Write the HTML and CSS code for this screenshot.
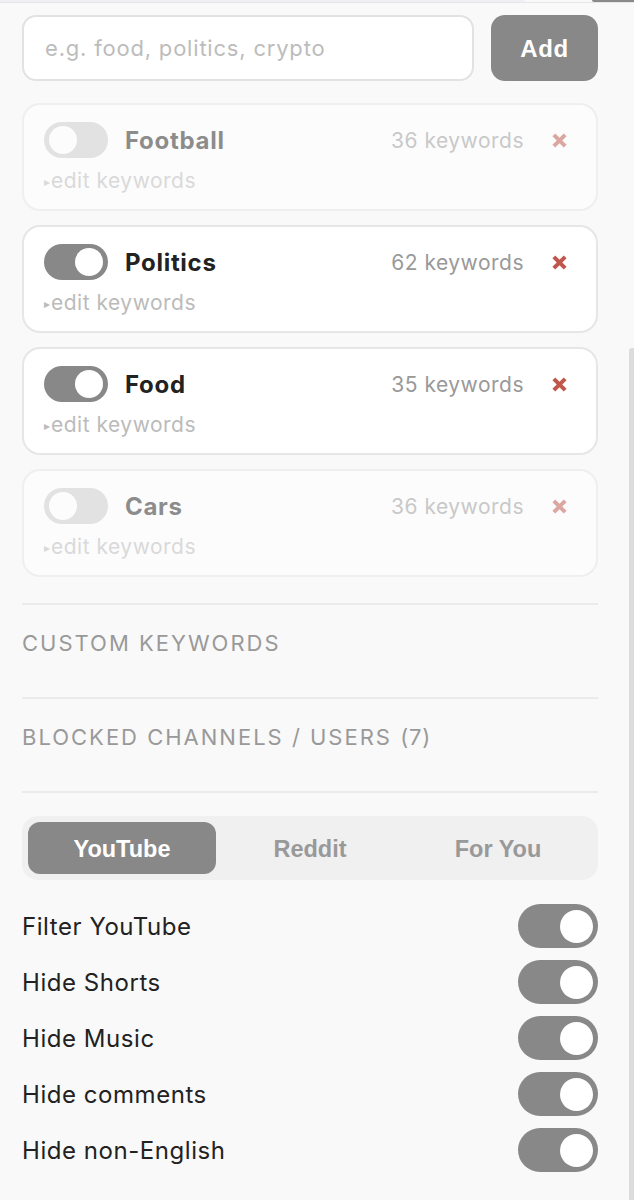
FILE: index.html
```html
<!DOCTYPE html>
<html lang="en">
<head>
<meta charset="utf-8">
<title>Filter settings</title>
<link rel="stylesheet" href="styles.css">
</head>
<body>
<div class="topstrip"><div class="topstrip-left"></div><div class="topstrip-right"></div></div>
<main class="panel">
  <form class="add-row">
    <input class="topic-input" type="text" placeholder="e.g. food, politics, crypto">
    <button class="add-btn" type="button">Add</button>
  </form>

  <section class="topics">
    <div class="card is-off">
      <div class="card-row">
        <span class="toggle small"><span class="knob"></span></span>
        <span class="card-name">Football</span>
        <span class="card-count">36 keywords</span>
        <span class="card-remove"><svg viewBox="0 0 18 18" width="17" height="17"><path d="M3 3 L15 15 M15 3 L3 15" /></svg></span>
      </div>
      <div class="card-edit"><span class="tri">▸</span>edit keywords</div>
    </div>
    <div class="card">
      <div class="card-row">
        <span class="toggle small on"><span class="knob"></span></span>
        <span class="card-name">Politics</span>
        <span class="card-count">62 keywords</span>
        <span class="card-remove"><svg viewBox="0 0 18 18" width="17" height="17"><path d="M3 3 L15 15 M15 3 L3 15" /></svg></span>
      </div>
      <div class="card-edit"><span class="tri">▸</span>edit keywords</div>
    </div>
    <div class="card">
      <div class="card-row">
        <span class="toggle small on"><span class="knob"></span></span>
        <span class="card-name">Food</span>
        <span class="card-count">35 keywords</span>
        <span class="card-remove"><svg viewBox="0 0 18 18" width="17" height="17"><path d="M3 3 L15 15 M15 3 L3 15" /></svg></span>
      </div>
      <div class="card-edit"><span class="tri">▸</span>edit keywords</div>
    </div>
    <div class="card is-off">
      <div class="card-row">
        <span class="toggle small"><span class="knob"></span></span>
        <span class="card-name">Cars</span>
        <span class="card-count">36 keywords</span>
        <span class="card-remove"><svg viewBox="0 0 18 18" width="17" height="17"><path d="M3 3 L15 15 M15 3 L3 15" /></svg></span>
      </div>
      <div class="card-edit"><span class="tri">▸</span>edit keywords</div>
    </div>
  </section>

  <div class="section">CUSTOM KEYWORDS</div>
  <div class="section">BLOCKED CHANNELS / USERS <span class="count">(7)</span></div>
  <div class="divider"></div>

  <nav class="tabs">
    <button class="tab active" type="button">YouTube</button>
    <button class="tab" type="button">Reddit</button>
    <button class="tab" type="button">For You</button>
  </nav>

  <ul class="settings">
    <li class="setting"><span>Filter YouTube</span><span class="toggle big on"><span class="knob"></span></span></li>
    <li class="setting"><span>Hide Shorts</span><span class="toggle big on"><span class="knob"></span></span></li>
    <li class="setting"><span>Hide Music</span><span class="toggle big on"><span class="knob"></span></span></li>
    <li class="setting"><span>Hide comments</span><span class="toggle big on"><span class="knob"></span></span></li>
    <li class="setting"><span>Hide non-English</span><span class="toggle big on"><span class="knob"></span></span></li>
  </ul>
</main>
<div class="scrollbar"></div>
</body>
</html>
```

FILE: styles.css
```css
* { box-sizing: border-box; }

html, body {
  margin: 0;
  padding: 0;
  background: #f9f9f9;
}

body {
  font-family: Inter, "Liberation Sans", Arial, sans-serif;
  color: #222;
}

.topstrip {
  height: 3px;
  display: flex;
  justify-content: space-between;
  border-bottom: 1px solid #e6e6e6;
}
.topstrip-left {
  width: 525px;
  height: 2px;
  background: #eef0f4;
  border-bottom-right-radius: 6px;
}
.topstrip-right {
  width: 42px;
  height: 2px;
  background: #8a8a8a;
  border-bottom-left-radius: 10px;
}

.panel {
  width: 576px;
  margin: 12px 0 0 22px;
}

.add-row {
  display: flex;
  gap: 17px;
  margin: 0;
}

.topic-input {
  flex: 1;
  height: 66px;
  border: 2px solid #e2e2e2;
  border-radius: 14px;
  background: #fff;
  padding: 0 21px;
  font-family: Inter, "Liberation Sans", Arial, sans-serif;
  font-size: 22px;
  letter-spacing: 0.8px;
  color: #222;
  outline: none;
}
.topic-input::placeholder { color: #bcbcbc; }

.add-btn {
  width: 107px;
  height: 66px;
  border: none;
  border-radius: 14px;
  background: #888;
  color: #fff;
  font-family: "Liberation Sans", Arial, sans-serif;
  font-weight: 700;
  font-size: 24px;
  letter-spacing: 0.6px;
  padding: 2px 0 0;
}

.topics {
  display: flex;
  flex-direction: column;
  gap: 14px;
  margin-top: 22px;
}

.card {
  background: #fff;
  border: 2px solid #e6e6e6;
  border-radius: 18px;
  padding: 16px 0 18px 20px;
  height: 108px;
}
.card.is-off { opacity: 0.5; }

.card-row {
  display: flex;
  align-items: center;
  height: 38px;
}

.toggle {
  position: relative;
  display: inline-block;
  flex: none;
  background: #cdcdcd;
}
.toggle.on { background: #888; }
.toggle .knob {
  position: absolute;
  background: #fff;
  border-radius: 50%;
}

.toggle.small {
  width: 64px;
  height: 36px;
  border-radius: 18px;
}
.toggle.small .knob {
  width: 28px;
  height: 28px;
  top: 4px;
  left: 5px;
}
.toggle.small.on .knob { left: 31px; }

.toggle.big {
  width: 80px;
  height: 44px;
  border-radius: 22px;
}
.toggle.big .knob {
  width: 33px;
  height: 33px;
  top: 5.5px;
  left: 42px;
}

.card-name {
  margin-left: 17px;
  font-size: 24px;
  font-weight: 700;
  letter-spacing: 0.7px;
  color: #222;
  flex: 1;
}

.card-count {
  font-size: 21px;
  letter-spacing: 0.5px;
  color: #999;
}

.card-remove {
  width: 30px;
  margin: 0 22px 0 20px;
  display: flex;
  justify-content: center;
}
.card-remove svg path {
  stroke: #c0574c;
  stroke-width: 4.2;
  stroke-linecap: butt;
  fill: none;
}

.card-edit {
  margin-top: 10px;
  font-size: 21px;
  letter-spacing: 0.5px;
  line-height: 24px;
  color: #bbb;
}
.card-edit .tri {
  font-size: 12px;
  margin-right: 1px;
  letter-spacing: 0;
  position: relative;
  top: -2px;
}

.section {
  margin-top: 0;
  border-top: 2px solid #ebebeb;
  padding: 26px 0 42px;
  font-size: 22px;
  line-height: 24px;
  letter-spacing: 2px;
  color: #999;
}
.topics + .section { margin-top: 26px; }
.section .count { letter-spacing: 0.8px; }

.divider {
  border-top: 2px solid #ebebeb;
}

.tabs {
  margin-top: 23px;
  display: grid;
  grid-template-columns: repeat(3, 1fr);
  padding: 6px;
  height: 64px;
  background: #f0f0f0;
  border-radius: 16px;
}

.tab {
  border: none;
  background: transparent;
  border-radius: 12px;
  font-family: "Liberation Sans", Arial, sans-serif;
  font-weight: 700;
  font-size: 23.5px;
  color: #999;
  padding: 2px 0 0;
}
.tab.active {
  background: #888;
  color: #fff;
}

.settings {
  list-style: none;
  margin: 24px 0 0;
  padding: 0;
  display: flex;
  flex-direction: column;
  gap: 12px;
}

.setting {
  display: flex;
  justify-content: space-between;
  align-items: center;
  height: 44px;
  font-size: 24px;
  letter-spacing: 0.55px;
  color: #222;
}

.scrollbar {
  position: fixed;
  right: 0;
  top: 348px;
  bottom: 0;
  width: 5px;
  background: #dcdcdc;
  border-top-left-radius: 3px;
}
```
